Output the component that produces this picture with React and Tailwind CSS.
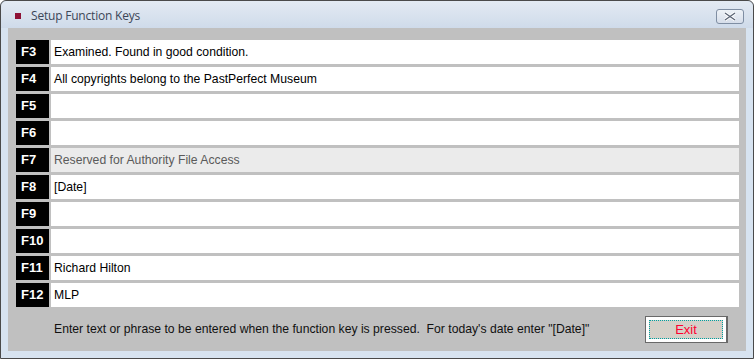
import React from 'react';

const keys = [
    { key: 'F3', text: 'Examined. Found in good condition.' },
    { key: 'F4', text: 'All copyrights belong to the PastPerfect Museum' },
    { key: 'F5', text: '' },
    { key: 'F6', text: '' },
    { key: 'F7', text: 'Reserved for Authority File Access', locked: true },
    { key: 'F8', text: '[Date]' },
    { key: 'F9', text: '' },
    { key: 'F10', text: '' },
    { key: 'F11', text: 'Richard Hilton' },
    { key: 'F12', text: 'MLP' },
];

const KeyRow = ({ item }) => (
    <div className="flex h-[24px] gap-[2px]">
        <div className="w-[33px] bg-black text-white font-bold text-[13px] flex items-center pl-[5px]">
            {item.key}
        </div>
        <div
            className={
                'w-[688px] flex items-center pl-[3px] text-[12.2px] ' +
                (item.locked ? 'bg-[#ebebeb] text-[#5a5a5a]' : 'bg-white text-black')
            }
        >
            {item.text}
        </div>
    </div>
);

export default function App() {
    return (
        <div
            className="w-[754px] h-[359px] bg-[#c5d3e4] border border-[#4a4a4a] rounded-tl-[6px] rounded-tr-[6px] flex flex-col"
            style={{ fontFamily: '"Liberation Sans", Arial, sans-serif' }}
        >
            {/* title bar */}
            <div className="h-[27px] flex items-center bg-gradient-to-b from-[#e3eaf3] to-[#cfdbea] rounded-t-[6px] pl-[14px] pr-[9px]">
                <div className="w-[6px] h-[6px] bg-[#8e1236] mt-[3px]" />
                <span
                    className="ml-[10px] mt-[3px] text-[12px] tracking-[-0.2px] text-[#3c4658]"
                    style={{ fontFamily: '"Open Sans", "Noto Sans", sans-serif' }}
                >
                    Setup Function Keys
                </span>
                <div className="ml-auto w-[28px] h-[15px] mt-[4px] border border-[#7f8ea3] rounded-[3px] bg-gradient-to-b from-[#eef2f7] to-[#d6deea] flex items-center justify-center">
                    <svg width="12" height="9" viewBox="0 0 12 9">
                        <path d="M1 1 L11 8 M11 1 L1 8" stroke="#ffffff" strokeWidth="3" />
                        <path d="M1 1 L11 8 M11 1 L1 8" stroke="#5a6475" strokeWidth="1.3" />
                    </svg>
                </div>
            </div>

            {/* client area */}
            <div className="flex-1 bg-[#d7e3f0] px-[7px] pb-[5px]">
                <div className="h-[323px] bg-[#c0c0c0] pt-[12px] pl-[8px] flex flex-col">
                    <div className="flex flex-col gap-[3px]">
                        {keys.map(item => (
                            <KeyRow key={item.key} item={item} />
                        ))}
                    </div>
                    <div className="flex items-center mt-[9px]">
                        <span className="ml-[38px] text-[12.2px] text-[#111]">
                            Enter text or phrase to be entered when the function key is pressed.&nbsp; For today's date enter "[Date]"
                        </span>
                        <button className="ml-auto mr-[18px] w-[83px] h-[27px] bg-[#696969] p-0 flex">
                            <div className="w-[80px] h-[25px] bg-white p-[1px] mt-[1px] ml-[1px] flex">
                                <div className="flex-1 bg-[#d4d0c8] border border-dotted border-[#00a0a0] m-[2px] flex items-center justify-center text-[13px] text-[#ff0030]">
                                    Exit
                                </div>
                            </div>
                        </button>
                    </div>
                </div>
            </div>
        </div>
    );
}
